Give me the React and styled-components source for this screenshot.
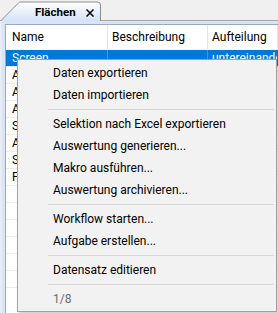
import React from "react";
import styled, { createGlobalStyle } from "styled-components";

const GlobalStyle = createGlobalStyle`
  html, body {
    margin: 0;
    padding: 0;
    background: #f0f0f0;
    overflow: hidden;
  }
  * {
    box-sizing: border-box;
  }
`;

const Screen = styled.div`
  position: relative;
  width: 278px;
  height: 313px;
  overflow: hidden;
  background: #f0f0f0;
  font-family: Roboto, "Liberation Sans", sans-serif;
  font-size: 12px;
  color: #000;
`;

const TabStrip = styled.div`
  display: flex;
  align-items: flex-end;
  height: 21px;
  border-bottom: 1px solid #a5a5a5;
`;

const Tab = styled.div`
  position: relative;
  width: 101px;
  height: 20px;
  margin-bottom: -1px;
  display: flex;
  align-items: center;
  padding-left: 35px;
  gap: 10px;
`;

const TabShape = styled.svg`
  position: absolute;
  left: 0;
  top: 0;
  z-index: 0;
`;

const TabLabel = styled.span`
  position: relative;
  z-index: 1;
  font-weight: bold;
  font-size: 11.5px;
  padding-top: 1px;
`;

const Close = styled.span`
  position: relative;
  z-index: 1;
  display: flex;
  padding-top: 3px;
`;

const Panel = styled.div`
  background: #d9e4f5;
  border-left: 2px solid #e9ecf2;
  padding: 3px 0 0 3px;
  height: 292px;
`;

const List = styled.div`
  background: #fff;
  border-left: 1px solid #98a8c8;
  border-top: 1px solid #98a8c8;
  height: 100%;
`;

const Row = styled.div`
  display: grid;
  grid-template-columns: 102px 100px 1fr;
  height: ${(p) => (p.$header ? 25 : 17)}px;
  border-bottom: 1px solid ${(p) => (p.$header ? "#fff" : "#ececec")};
  background: ${(p) => (p.$selected ? "#0078d7" : "#fff")};
  color: ${(p) => (p.$selected ? "#fff" : "#000")};
`;

const Cell = styled.div`
  display: flex;
  align-items: center;
  padding-left: ${(p) => (p.$first ? 6 : 4)}px;
  white-space: nowrap;
  overflow: hidden;
  border-right: 1px solid
    ${(p) => (p.$header ? "#e5e5e5" : p.$selected ? "#3d98e0" : "transparent")};
`;

const Menu = styled.div`
  position: absolute;
  left: 17px;
  top: 59px;
  width: 260px;
  height: 253px;
  background: #f2f2f2;
  border: 1px solid #a0a0a0;
  box-shadow: 2px 2px 3px rgba(0, 0, 0, 0.2);
  padding: 2px 2px 0 2px;
  display: flex;
  flex-direction: column;
`;

const Item = styled.div`
  height: 22px;
  display: flex;
  align-items: center;
  padding-left: 33px;
  color: ${(p) => (p.$disabled ? "#6d6d6d" : "#000")};
  white-space: nowrap;
`;

const Separator = styled.div`
  height: 1px;
  background: #d7d7d7;
  margin: 3px 0 3px 28px;
`;

const rows = ["Anbau", "Abstell", "Arbeit", "Schlaf", "Aula", "Sauna", "Flur", "", "", "", "", "", ""];

const menu = [
  ["Daten exportieren"],
  ["Daten importieren"],
  null,
  ["Selektion nach Excel exportieren"],
  ["Auswertung generieren..."],
  ["Makro ausführen..."],
  ["Auswertung archivieren..."],
  null,
  ["Workflow starten..."],
  ["Aufgabe erstellen..."],
  null,
  ["Datensatz editieren"],
  null,
  ["1/8", true],
];

export default function App() {
  return (
    <Screen>
      <GlobalStyle />
      <TabStrip>
        <Tab>
          <TabShape width="101" height="20" viewBox="0 0 101 20">
            <defs>
              <linearGradient id="tabg" x1="0" y1="0" x2="0" y2="1">
                <stop offset="0" stopColor="#ffffff" />
                <stop offset="1" stopColor="#d4e2f6" />
              </linearGradient>
            </defs>
            <path
              d="M0.5 20 L19 1.5 Q19.5 1 20.5 1 H97.5 Q100.5 1 100.5 4 V20"
              fill="url(#tabg)"
              stroke="#8c8c8c"
              strokeWidth="1"
            />
          </TabShape>
          <TabLabel>Flächen</TabLabel>
          <Close>
            <svg width="8" height="8" viewBox="0 0 8 8">
              <path d="M0.5 0.5 L7.5 7.5 M7.5 0.5 L0.5 7.5" stroke="#000" strokeWidth="1.5" />
            </svg>
          </Close>
        </Tab>
      </TabStrip>
      <Panel>
        <List>
          <Row $header>
            <Cell $header $first>Name</Cell>
            <Cell $header>Beschreibung</Cell>
            <Cell $header>Aufteilung</Cell>
          </Row>
          <Row $selected>
            <Cell $selected $first>Screen</Cell>
            <Cell $selected></Cell>
            <Cell>untereinander</Cell>
          </Row>
          {rows.map((r, i) => (
            <Row key={i}>
              <Cell $first>{r}</Cell>
              <Cell></Cell>
              <Cell></Cell>
            </Row>
          ))}
        </List>
      </Panel>
      <Menu>
        {menu.map((m, i) =>
          m ? (
            <Item key={i} $disabled={m[1]}>
              {m[0]}
            </Item>
          ) : (
            <Separator key={i} />
          )
        )}
      </Menu>
    </Screen>
  );
}
